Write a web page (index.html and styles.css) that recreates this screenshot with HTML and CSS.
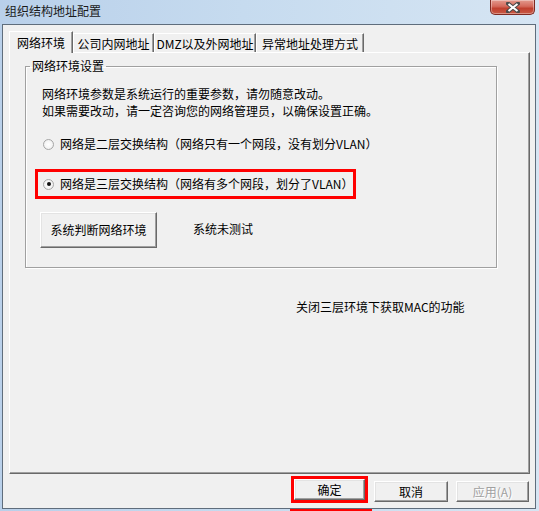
FILE: index.html
```html
<!DOCTYPE html>
<html lang="zh-CN">
<head>
<meta charset="utf-8">
<title>组织结构地址配置</title>
<link rel="stylesheet" href="styles.css">
</head>
<body>
<div class="window">
  <div class="titlebar">
    <span class="title">组织结构地址配置</span>
    <div class="close">
      <svg width="14" height="11" viewBox="0 0 14 11">
        <path d="M2 1.5 L12 9.5 M12 1.5 L2 9.5" stroke="#4a4a4a" stroke-width="4" stroke-linecap="square"/>
        <path d="M2.5 2 L11.5 9 M11.5 2 L2.5 9" stroke="#ffffff" stroke-width="2"/>
      </svg>
    </div>
  </div>
  <div class="client">
    <div class="tabs">
      <div class="tab active t1">网络环境</div>
      <div class="tab t2">公司内网地址</div>
      <div class="tab t3">DMZ以及外网地址</div>
      <div class="tab t4">异常地址处理方式</div>
    </div>
    <div class="panel">
      <fieldset class="group">
        <legend>网络环境设置</legend>
        <p class="desc">网络环境参数是系统运行的重要参数，请勿随意改动。<br>如果需要改动，请一定咨询您的网络管理员，以确保设置正确。</p>
        <div class="radio first"><span class="circle"></span><span>网络是二层交换结构（网络只有一个网段，没有划分VLAN）</span></div>
        <div class="highlight">
          <div class="radio"><span class="circle checked"></span><span>网络是三层交换结构（网络有多个网段，划分了VLAN）</span></div>
        </div>
        <div class="detect-row">
          <button class="btn detect">系统判断网络环境</button>
          <span class="status">系统未测试</span>
        </div>
      </fieldset>
      <div class="mac-note">关闭三层环境下获取MAC的功能</div>
    </div>
    <div class="actions">
      <span class="red-wrap"><button class="btn ok">确定</button></span>
      <button class="btn cancel">取消</button>
      <button class="btn apply" disabled>应用(A)</button>
    </div>
  </div>
  <div class="bottom-strip"><span class="red-mark"></span></div>
</div>
</body>
</html>
```
FILE: styles.css
```css
* { box-sizing: border-box; }
html, body { margin: 0; padding: 0; }
body {
  width: 539px;
  height: 511px;
  overflow: hidden;
  font-family: "Noto Sans CJK SC", "Liberation Sans", sans-serif;
  font-size: 12px;
  color: #000;
}
.window {
  width: 539px;
  height: 511px;
  background: linear-gradient(90deg, #b9d0ea 0%, #c6dbef 45%, #d6e5f3 100%);
  display: flex;
  flex-direction: column;
}
.titlebar {
  height: 24px;
  display: flex;
  justify-content: space-between;
  align-items: flex-start;
  padding-left: 5px;
  padding-right: 4px;
}
.title {
  margin-top: 4px;
  line-height: 14px;
  font-size: 12px;
  color: #1a1a1a;
}
.close {
  width: 45px;
  height: 15px;
  border: 1px solid #7e2a22;
  border-top: none;
  border-radius: 0 0 5px 5px;
  background: linear-gradient(180deg, #e39a8e 0%, #d46a5c 45%, #c0402f 60%, #c85a45 100%);
  display: flex;
  justify-content: center;
  align-items: center;
  box-shadow: inset 0 0 0 1px rgba(255,255,255,0.35);
}
.client {
  margin: 0 3px 0 2px;
  height: 485px;
  border: 1px solid #5f6d7c;
  background: #f0f0f0;
  padding: 6px 5px 0 6px;
  display: flex;
  flex-direction: column;
}
.tabs {
  display: flex;
  align-items: flex-end;
  height: 21px;
}
.tab {
  height: 19px;
  line-height: 17px;
  text-align: center;
  border-top: 1px solid #ffffff;
  border-left: 1px solid #ffffff;
  border-right: 1px solid #696969;
  box-shadow: inset -1px 0 0 #a0a0a0;
  background: #f0f0f0;
  white-space: nowrap;
  padding-top: 1px;
}
.tab.active {
  height: 22px;
  margin-bottom: -1px;
  position: relative;
  z-index: 1;
  padding-top: 2px;
}
.t1 { width: 64px; }
.t2 { width: 81px; }
.t3 { width: 102px; }
.t4 { width: 108px; }
.panel {
  height: 422px;
  border-top: 1px solid #ffffff;
  border-left: 1px solid #ffffff;
  border-right: 1px solid #696969;
  border-bottom: 1px solid #696969;
  box-shadow: inset -1px -1px 0 #a0a0a0;
  display: flex;
  flex-direction: column;
  align-items: flex-start;
}
.group {
  margin: 6px 0 0 15px;
  width: 472px;
  height: 209px;
  border: 1px solid #a0a0a0;
  box-shadow: inset 1px 1px 0 #ffffff, 1px 1px 0 #ffffff;
  padding: 0 0 0 4px;
  min-width: 0;
}
.group legend {
  padding: 0 2px;
  line-height: 14px;
  height: 14px;
}
.desc {
  margin: 12px 0 0 12px;
  line-height: 17px;
}
.radio {
  display: flex;
  align-items: center;
  height: 14px;
  line-height: 14px;
  white-space: nowrap;
}
.radio.first {
  margin: 18px 0 0 13px;
}
.circle {
  width: 11px;
  height: 11px;
  border-radius: 50%;
  border: 1px solid #a7a7a7;
  background: radial-gradient(circle at 50% 50%, #ffffff 0%, #f4f4f4 60%, #dcdcdc 100%);
  margin-right: 6px;
  flex: none;
  display: flex;
  justify-content: center;
  align-items: center;
}
.circle.checked::after {
  content: "";
  width: 4px;
  height: 4px;
  border-radius: 50%;
  background: #111;
}
.highlight {
  margin: 18px 0 0 5px;
  width: 321px;
  height: 30px;
  border: 3px solid #ff0000;
  padding: 5px 0 0 5px;
}
.detect-row {
  margin: 13px 0 0 10px;
  display: flex;
  align-items: center;
}
.btn {
  font-family: "Noto Sans CJK SC", "Liberation Sans", sans-serif;
  font-size: 12px;
  color: #000;
  background: #f0f0f0;
  border: 1px solid;
  border-color: #ffffff #696969 #696969 #ffffff;
  box-shadow: inset -1px -1px 0 #a0a0a0, inset 1px 1px 0 #e3e3e3;
  padding: 0;
  margin: 0;
  line-height: 14px;
}
.detect {
  width: 117px;
  height: 36px;
}
.status {
  margin-left: 36px;
  margin-top: -4px;
}
.mac-note {
  margin: 32px 0 0 286px;
  line-height: 14px;
}
.actions {
  display: flex;
  justify-content: flex-end;
  align-items: flex-start;
  margin-top: 2px;
  padding-right: 1px;
}
.red-wrap {
  display: flex;
  border: 3px solid #ff0000;
  width: 77px;
  height: 27px;
}
.ok {
  width: 71px;
  height: 21px;
}
.cancel {
  width: 74px;
  height: 21px;
  margin: 5px 0 0 6px;
}
.apply {
  width: 73px;
  height: 21px;
  margin: 5px 0 0 8px;
  color: #a0a0a0;
  text-shadow: 1px 1px 0 #ffffff;
}
.bottom-strip {
  height: 2px;
  display: flex;
  padding-left: 290px;
}
.red-mark {
  width: 82px;
  height: 2px;
  background: #ff0000;
}
```
